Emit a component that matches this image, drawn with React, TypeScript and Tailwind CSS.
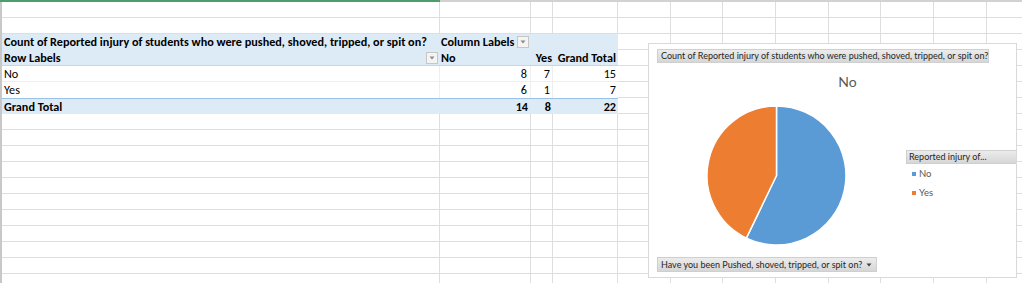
import React from "react";

const COLS = [
  "w-[438px]",
  "w-[91px]",
  "w-[22px]",
  "w-[65px]",
  "w-[53px]",
  "w-[52px]",
  "w-[53px]",
  "w-[53px]",
  "w-[52px]",
  "w-[53px]",
  "w-[53px]",
  "w-[53px]",
];

function GridRow() {
  return (
    <div className="flex h-[16px] shrink-0">
      {COLS.map((c, i) => (
        <div key={i} className={`${c} shrink-0 border-r border-b border-[#dedede]`} />
      ))}
    </div>
  );
}

function RestCells() {
  return (
    <>
      {COLS.slice(4).map((c, i) => (
        <div key={i} className={`${c} shrink-0 border-r border-b border-[#dedede]`} />
      ))}
    </>
  );
}

function DropBtn() {
  return (
    <div className="w-[12px] h-[12px] shrink-0 border border-[#c6c6c6] bg-[#f4f4f4] flex items-center justify-center">
      <svg width="6" height="4" viewBox="0 0 6 4">
        <path d="M0.5 0.5 L5.5 0.5 L3 3.5 Z" fill="#8a8a8a" />
      </svg>
    </div>
  );
}

function PivotRow({
  children,
  className,
}: {
  children: React.ReactNode;
  className: string;
}) {
  return (
    <div className="flex h-[16px] shrink-0">
      <div className={`flex w-[616px] shrink-0 ${className}`}>{children}</div>
      <RestCells />
    </div>
  );
}

function Chart() {
  return (
    <div
      className="absolute left-[648px] top-[43px] w-[369px] h-[235px] bg-white border border-[#d9d9d9] flex flex-col"
      style={{ fontFamily: "Lato, 'Open Sans', sans-serif" }}
    >
      <div className="pt-[5px] pl-[8px]">
        <div className="h-[14px] w-[332px] bg-gradient-to-b from-[#ececec] to-[#d6d6d6] border border-[#cfcfcf] text-[9px] leading-[12px] text-[#262626] pl-[3px] whitespace-nowrap">
          Count of Reported injury of students who were pushed, shoved, tripped, or spit on?
        </div>
      </div>
      <div className="mt-[11px] h-[16px] pl-[30px] text-center text-[14px] leading-[16px] text-[#595959]">
        No
      </div>
      <div className="mt-[15px] flex">
        <div className="ml-[57px] w-[141px] h-[141px] shrink-0">
          <svg width="141" height="141" viewBox="0 0 141 141">
            <path
              d="M70.5 70.5 L70.5 1 A69.5 69.5 0 1 1 40.34 133.12 Z"
              fill="#5b9bd5"
              stroke="#ffffff"
              strokeWidth="1.5"
              strokeLinejoin="round"
            />
            <path
              d="M70.5 70.5 L40.34 133.12 A69.5 69.5 0 0 1 70.5 1 Z"
              fill="#ed7d31"
              stroke="#ffffff"
              strokeWidth="1.5"
              strokeLinejoin="round"
            />
          </svg>
        </div>
        <div className="ml-[59px] mt-[45px] flex-1 flex flex-col">
          <div className="h-[14px] bg-gradient-to-b from-[#ececec] to-[#d6d6d6] border-y border-l border-[#cfcfcf] text-[9px] leading-[12px] text-[#262626] pl-[2px] whitespace-nowrap">
            Reported injury of...
          </div>
          <div className="mt-[4px] flex items-center h-[12px] pl-[6px] text-[9.5px] text-[#595959]">
            <div className="w-[4px] h-[4px] bg-[#5b9bd5] mr-[3px]" />
            No
          </div>
          <div className="mt-[7px] flex items-center h-[12px] pl-[6px] text-[9.5px] text-[#595959]">
            <div className="w-[4px] h-[4px] bg-[#ed7d31] mr-[3px]" />
            Yes
          </div>
        </div>
      </div>
      <div className="mt-[11px] pl-[8px]">
        <div className="h-[15px] w-[220px] bg-gradient-to-b from-[#ececec] to-[#d6d6d6] border border-[#cfcfcf] text-[9px] leading-[13px] text-[#262626] pl-[3px] whitespace-nowrap flex items-center overflow-hidden">
          <span className="shrink-0">Have you been Pushed, shoved, tripped, or spit on?</span>
          <svg width="6" height="4" viewBox="0 0 6 4" className="ml-[4px] shrink-0">
            <path d="M0.5 0.5 L5.5 0.5 L3 3.5 Z" fill="#404040" />
          </svg>
        </div>
      </div>
    </div>
  );
}

export default function App() {
  const cell = "text-[12.2px] leading-[16px] text-black";
  return (
    <div
      className="relative w-[1022px] h-[283px] overflow-hidden bg-white"
      style={{ fontFamily: "Carlito, Calibri, Lato, sans-serif" }}
    >
      <div className="flex h-[2px]">
        <div className="w-[440px] bg-[#4f9d6b]" />
        <div className="flex-1 bg-[#d2d2d2]" />
      </div>
      <div className="flex flex-col border-l-2 border-[#c8c8c8]">
        <GridRow />
        <GridRow />
        <PivotRow className={`bg-[#ddebf7] font-bold ${cell}`}>
          <div className="w-[438px] shrink-0 pl-[2px] whitespace-nowrap">
            Count of Reported injury of students who were pushed, shoved, tripped, or spit on?
          </div>
          <div className="w-[91px] shrink-0 flex items-center pl-[1px]">
            <span className="whitespace-nowrap">Column Labels</span>
            <div className="ml-auto mr-[2px]">
              <DropBtn />
            </div>
          </div>
          <div className="w-[22px] shrink-0" />
          <div className="w-[65px] shrink-0" />
        </PivotRow>
        <PivotRow className={`bg-[#ddebf7] font-bold border-b border-[#bdd7ee] ${cell}`}>
          <div className="w-[438px] shrink-0 pl-[2px] flex items-center">
            <span>Row Labels</span>
            <div className="ml-auto mr-[2px]">
              <DropBtn />
            </div>
          </div>
          <div className="w-[91px] shrink-0 pl-[1px]">No</div>
          <div className="w-[22px] shrink-0 text-right pr-[1px] whitespace-nowrap">Yes</div>
          <div className="w-[65px] shrink-0 text-right pr-[2px] whitespace-nowrap">Grand Total</div>
        </PivotRow>
        <PivotRow className={`bg-white border-b border-[#eeeeee] ${cell}`}>
          <div className="w-[438px] shrink-0 pl-[2px] border-r border-[#eeeeee]">No</div>
          <div className="w-[91px] shrink-0 text-right pr-[3px] border-r border-[#eeeeee]">8</div>
          <div className="w-[22px] shrink-0 text-right pr-[2px] border-r border-[#eeeeee]">7</div>
          <div className="w-[65px] shrink-0 text-right pr-[2px]">15</div>
        </PivotRow>
        <PivotRow className={`bg-white ${cell}`}>
          <div className="w-[438px] shrink-0 pl-[2px] border-r border-[#eeeeee]">Yes</div>
          <div className="w-[91px] shrink-0 text-right pr-[3px] border-r border-[#eeeeee]">6</div>
          <div className="w-[22px] shrink-0 text-right pr-[2px] border-r border-[#eeeeee]">1</div>
          <div className="w-[65px] shrink-0 text-right pr-[2px]">7</div>
        </PivotRow>
        <PivotRow className={`bg-[#ddebf7] font-bold border-t border-[#9bc2e6] ${cell}`}>
          <div className="w-[438px] shrink-0 pl-[2px] leading-[15px]">Grand Total</div>
          <div className="w-[91px] shrink-0 text-right pr-[3px] leading-[15px]">14</div>
          <div className="w-[22px] shrink-0 text-right pr-[2px] leading-[15px]">8</div>
          <div className="w-[65px] shrink-0 text-right pr-[2px] leading-[15px]">22</div>
        </PivotRow>
        {Array.from({ length: 11 }).map((_, i) => (
          <GridRow key={i} />
        ))}
      </div>
      <Chart />
    </div>
  );
}
